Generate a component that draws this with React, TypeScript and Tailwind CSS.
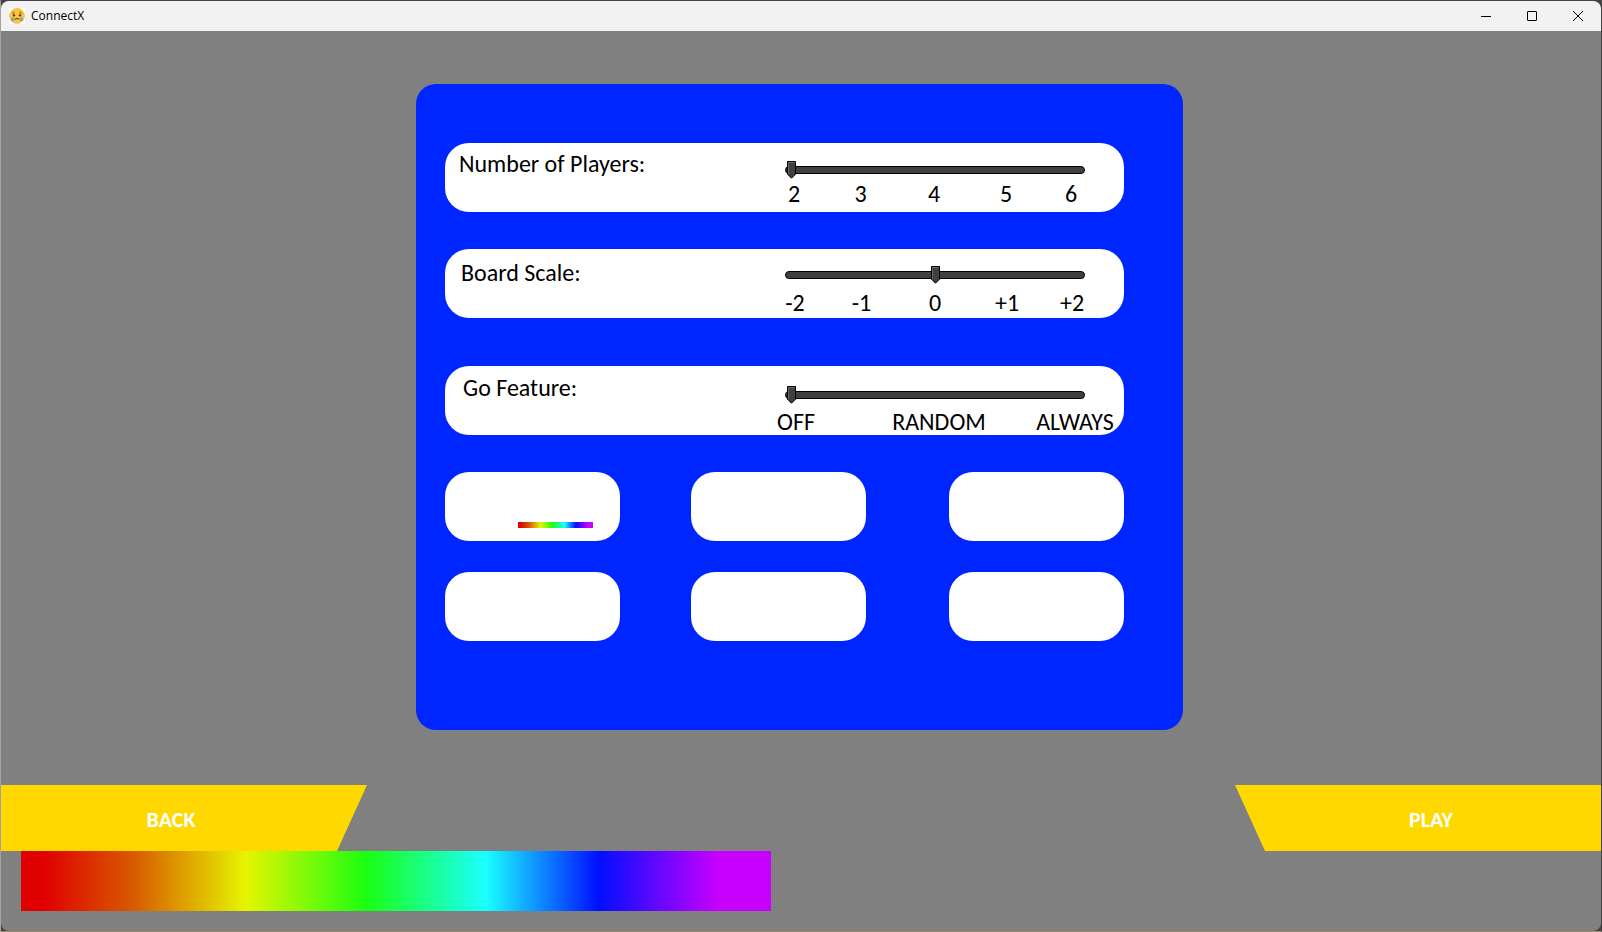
import { useState } from "react";

type Setting = {
  id: string;
  label: string;
  ticks: string[];
  initial: number;
  rowClass: string;
  labelClass: string;
  sliderClass: string;
  tickClass: string;
};

const settings: Setting[] = [
  {
    id: "players",
    label: "Number of Players:",
    ticks: ["2", "3", "4", "5", "6"],
    initial: 0,
    rowClass: "",
    labelClass: "pt-[7px] pl-[14px]",
    sliderClass: "gap-[3px] pt-[18px]",
    tickClass: "-ml-[21px] w-[337px] grid-cols-[60px_73px_74px_70px_60px]",
  },
  {
    id: "scale",
    label: "Board Scale:",
    ticks: ["-2", "-1", "0", "+1", "+2"],
    initial: 2,
    rowClass: "mt-[37px]",
    labelClass: "pt-[10px] pl-4",
    sliderClass: "gap-[7px] pt-[17px]",
    tickClass: "-ml-5 w-[337px] grid-cols-[60px_73px_74px_70px_60px]",
  },
  {
    id: "go",
    label: "Go Feature:",
    ticks: ["OFF", "RANDOM", "ALWAYS"],
    initial: 0,
    rowClass: "mt-12",
    labelClass: "pt-2 pl-[18px]",
    sliderClass: "gap-[6px] pt-5",
    tickClass: "-ml-[38px] w-[370px] grid-cols-[98px_188px_84px]",
  },
];

const spectrum =
  "bg-[linear-gradient(90deg,#e00000_3%,#d85a00_15%,#e6f500_30%,#1aff10_46%,#1affff_62%,#000fff_77%,#c800ff_93%)]";

function SettingRow({ setting }: { setting: Setting }) {
  const [value, setValue] = useState(setting.initial);
  const last = setting.ticks.length - 1;
  return (
    <div
      className={`flex h-[69px] justify-between rounded-3xl bg-white pr-[39px] text-black ${setting.rowClass}`}
    >
      <label htmlFor={setting.id} className={`text-2xl leading-7 ${setting.labelClass}`}>
        {setting.label}
      </label>
      <div className={`flex w-[300px] flex-col ${setting.sliderClass}`}>
        <div className="relative flex h-[18px] items-center">
          <input
            id={setting.id}
            type="range"
            min={0}
            max={last}
            value={value}
            aria-valuetext={setting.ticks[value]}
            onChange={(e) => setValue(Number(e.target.value))}
            className="h-2 w-full appearance-none rounded-full border border-black bg-[#404040] [&::-webkit-slider-thumb]:h-[18px] [&::-webkit-slider-thumb]:w-[9px] [&::-webkit-slider-thumb]:appearance-none [&::-webkit-slider-thumb]:opacity-0"
          />
          <svg
            aria-hidden="true"
            viewBox="0 0 9 18"
            className="pointer-events-none absolute top-0 h-[18px] w-[9px]"
            style={{ left: 2 + (288 * value) / last }}
          >
            <path d="M0.5 0.5H8.5V13.2L4.5 17.2L0.5 13.2Z" fill="#404040" stroke="#000" />
            <path d="M1.5 13V1.5H7.5" fill="none" stroke="#6a6a6a" />
          </svg>
        </div>
        <div className={`grid text-center text-2xl leading-6 ${setting.tickClass}`}>
          {setting.ticks.map((tick) => (
            <span key={tick}>{tick}</span>
          ))}
        </div>
      </div>
    </div>
  );
}

function TitleBar() {
  return (
    <header className="flex h-[30px] items-center justify-between bg-[#f2f2f2] pl-2 text-black">
      <div className="flex items-center gap-[6px]">
        <svg aria-hidden="true" viewBox="0 0 16 16" className="h-4 w-4 bg-white">
          <circle cx="8" cy="8" r="7.9" fill="#fcc43c" />
          <path d="M3 5.2L5.6 4.2M13 5.2L10.4 4.2" stroke="#8a5a1c" fill="none" />
          <ellipse cx="5" cy="7.2" rx="1.1" ry="1.2" fill="#5b3a1d" />
          <ellipse cx="11" cy="7.2" rx="1.1" ry="1.2" fill="#5b3a1d" />
          <path d="M5.8 11.4Q8 9.6 10.2 11.4" stroke="#5b3a1d" strokeWidth="1.2" fill="none" />
          <path d="M3.6 8.6Q5.4 11 4.9 12.6Q3.6 14 2.4 12.4Q2.2 10.8 3.6 8.6Z" fill="#55a8e8" />
          <path d="M12.4 8.6Q10.6 11 11.1 12.6Q12.4 14 13.6 12.4Q13.8 10.8 12.4 8.6Z" fill="#55a8e8" />
        </svg>
        <h1 className="font-['Open_Sans','Noto_Sans',sans-serif] text-[12px] leading-4">ConnectX</h1>
      </div>
      <div className="flex">
        <button type="button" aria-label="Minimize" className="flex h-[30px] w-[46px] items-center justify-center">
          <svg viewBox="0 0 10 10" className="h-[10px] w-[10px]">
            <path d="M0 5.5H10" stroke="#000" />
          </svg>
        </button>
        <button type="button" aria-label="Maximize" className="flex h-[30px] w-[46px] items-center justify-center">
          <svg viewBox="0 0 10 10" className="h-[10px] w-[10px]">
            <rect x="0.5" y="0.5" width="9" height="9" rx="0.5" fill="none" stroke="#000" />
          </svg>
        </button>
        <button type="button" aria-label="Close" className="flex h-[30px] w-[46px] items-center justify-center">
          <svg viewBox="0 0 10 10" className="h-[10px] w-[10px]">
            <path d="M0 0L10 10M10 0L0 10" stroke="#000" fill="none" />
          </svg>
        </button>
      </div>
    </header>
  );
}

export default function App() {
  return (
    <div className="flex min-h-screen flex-col border border-[#444244] border-b-[#998f60] border-l-[#a3a3a3] bg-[#444244] font-['Carlito','Lato',sans-serif]">
      <div className="flex flex-1 flex-col overflow-hidden rounded-lg bg-[#808080]">
        <TitleBar />
        <main className="flex flex-1 flex-col pt-[53px]">
          <div className="flex justify-center pr-[3px]">
            <section className="h-[646px] w-[767px] rounded-[20px] bg-[#0026ff] pt-[59px] pr-[59px] pl-[29px]">
              {settings.map((s) => (
                <SettingRow key={s.id} setting={s} />
              ))}
              <div className="mt-[37px] grid grid-cols-[246px_258px_175px] gap-y-[31px]">
                {[0, 1, 2, 3, 4, 5].map((slot) => (
                  <div key={slot} className="flex h-[69px] w-[175px] items-end justify-end rounded-3xl bg-white pr-[27px] pb-[13px]">
                    {slot === 0 && <div className={`h-[6px] w-[75px] ${spectrum}`} />}
                  </div>
                ))}
              </div>
            </section>
          </div>
          <nav className="mt-auto flex justify-between pt-[55px] text-[22px] leading-6 font-bold text-white">
            <button
              type="button"
              className="h-[66px] w-[366px] bg-[#ffd800] pt-1 pr-[26px] [clip-path:polygon(0_0,100%_0,336px_100%,0_100%)]"
            >
              BACK
            </button>
            <button
              type="button"
              className="h-[66px] w-[366px] bg-[#ffd800] pt-1 pl-[26px] [clip-path:polygon(0_0,100%_0,100%_100%,30px_100%)]"
            >
              PLAY
            </button>
          </nav>
          <div className={`mb-5 ml-5 h-[60px] w-[750px] ${spectrum}`} />
        </main>
      </div>
    </div>
  );
}
